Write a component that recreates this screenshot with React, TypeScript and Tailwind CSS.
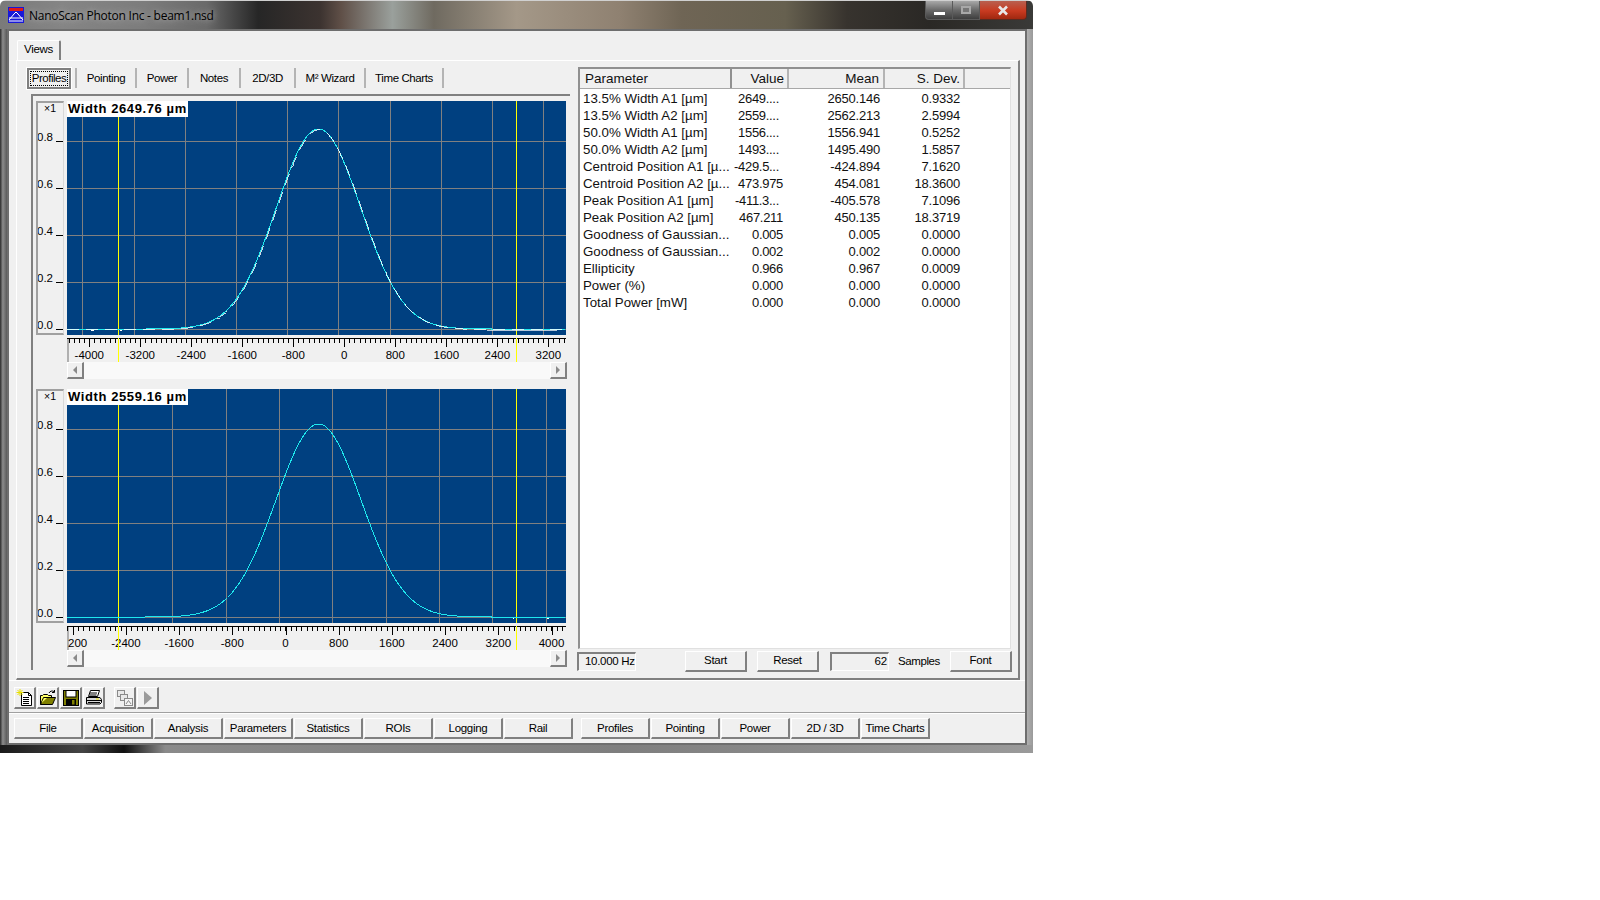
import React from 'react';

// Beam profile curves, in local plot pixels
const gaussian = (center: number, sigma: number, base: number, height: number, width: number) => {
    const pts: string[] = [];
    for (let x = 0; x <= width; x += 1.5) {
        const y = base - height * Math.exp(-((x - center) ** 2) / (2 * sigma * sigma));
        pts.push(`${x},${y.toFixed(1)}`);
    }
    return pts.join(' ');
};

const ROWS = [
    ['13.5% Width A1 [µm]', '2649....', '2650.146', '0.9332'],
    ['13.5% Width A2 [µm]', '2559....', '2562.213', '2.5994'],
    ['50.0% Width A1 [µm]', '1556....', '1556.941', '0.5252'],
    ['50.0% Width A2 [µm]', '1493....', '1495.490', '1.5857'],
    ['Centroid Position A1 [µ...', '-429.5...', '-424.894', '7.1620'],
    ['Centroid Position A2 [µ...', '473.975', '454.081', '18.3600'],
    ['Peak Position A1 [µm]', '-411.3...', '-405.578', '7.1096'],
    ['Peak Position A2 [µm]', '467.211', '450.135', '18.3719'],
    ['Goodness of Gaussian...', '0.005', '0.005', '0.0000'],
    ['Goodness of Gaussian...', '0.002', '0.002', '0.0000'],
    ['Ellipticity', '0.966', '0.967', '0.0009'],
    ['Power (%)', '0.000', '0.000', '0.0000'],
    ['Total Power [mW]', '0.000', '0.000', '0.0000'],
];

const SUB_TABS = [
    { label: 'Pointing', w: 'w-[60px]' },
    { label: 'Power', w: 'w-[52px]' },
    { label: 'Notes', w: 'w-[52px]' },
    { label: '2D/3D', w: 'w-[55px]' },
    { label: 'M² Wizard', w: 'w-[70px]' },
    { label: 'Time Charts', w: 'w-[78px]' },
];

const raised = 'border-t border-l border-r-2 border-b-2 border-t-white border-l-white border-r-[#808080] border-b-[#808080]';
const sunken = 'border-t-2 border-l-2 border-r border-b border-t-[#808080] border-l-[#808080] border-r-white border-b-white';

const PushButton = ({ label, className = '' }: { label: string; className?: string }) => (
    <button className={`${raised} ${className} h-[21px] bg-[#f0f0f0] flex items-center justify-center text-[11.5px] tracking-[-0.3px] text-black`}>
        {label}
    </button>
);

const ScaleBox = ({ height }: { height: number }) => (
    <div className="w-[28px] shrink-0 bg-[#f0f0f0] border-l-2 border-t-2 border-b-2 border-r border-l-[#a0a0a0] border-t-[#a0a0a0] border-b-[#a0a0a0] border-r-[#d8d8d8]">
        <svg width="25" height={height - 4}>
            <text x="6" y="9" fontSize="10.5" fill="#000">×1</text>
            {['0.8', '0.6', '0.4', '0.2', '0.0'].map((t, i) => (
                <g key={t}>
                    <text x="-1" y={38 + i * 47} fontSize="11.5" fill="#000">{t}</text>
                    <rect x="18" y={38 + i * 47} width="7" height="1" fill="#000" />
                </g>
            ))}
        </svg>
    </div>
);

const Plot = ({ label, height, xs, ys, base, peak, sigma, speckle }: { label: string; height: number; xs: number[]; ys: number[]; base: number; peak: number; sigma: number; speckle: boolean }) => (
    <div className="relative w-[499px] bg-[#004080]" style={{ height }}>
        <svg width="499" height={height} className="block">
            {xs.map(x => <rect key={x} x={x} y="0" width="1" height={height} fill="#808080" />)}
            {ys.map(y => <rect key={y} x="0" y={y} width="499" height="1" fill="#808080" />)}
            <rect x="51" y="0" width="1" height={height} fill="#ffff00" />
            <rect x="449" y="0" width="1" height={height} fill="#ffff00" />
            <polyline points={gaussian(251.5, sigma, base, peak, 499)} fill="none" stroke="#1fe8ee" strokeWidth="1" shapeRendering="crispEdges" />
            {speckle && <polyline points={gaussian(252.2, sigma, base + 0.6, peak, 499)} fill="none" stroke="#ffffff" strokeWidth="0.8" strokeDasharray="12 7" shapeRendering="crispEdges" />}
            {speckle ? (
                <g fill="#ffffff">
                    <rect x="24" y={base + 1} width="3" height="1" />
                    <rect x="53" y={base + 1} width="2" height="1" />
                    <rect x="420" y={base + 1} width="70" height="1" opacity="0.7" />
                </g>
            ) : (
                <g fill="#ffffff">
                    <rect x="446" y={base + 1} width="1" height="1" />
                    <rect x="480" y={base + 1} width="2" height="1" />
                </g>
            )}
        </svg>
        <div className="absolute left-0 top-0 w-[121px] h-[16px] bg-white pl-[1px] text-[13px] leading-[16px] font-bold tracking-[0.6px] text-black whitespace-nowrap">
            {label}
        </div>
    </div>
);

const Axis = ({ first, step, labels }: { first: number; step: number; labels: string[] }) => {
    const minors: number[] = [];
    const minor = step / 10;
    const start = first - minor * Math.floor(first / minor);
    for (let x = start; x < 499; x += minor) minors.push(x);
    return (
        <svg width="500" height="24" className="block">
            <rect x="0" y="0" width="2" height="24" fill="#b0b0b0" />
            <rect x="0" y="0" width="499" height="1" fill="#000" />
            {minors.map(x => <rect key={x} x={Math.round(x)} y="0" width="1" height="5" fill="#000" />)}
            {labels.map((t, i) => {
                const x = first + i * step;
                // the first label of the lower axis shows only its tail
                const atEdge = x < 15;
                return (
                    <g key={t}>
                        <rect x={Math.round(x)} y="0" width="1" height="9" fill="#000" />
                        <text x={atEdge ? 1 : x} y="21" textAnchor={atEdge ? 'start' : 'middle'} fontSize="11.5" fill="#000">{t}</text>
                    </g>
                );
            })}
            <rect x="51" y="0" width="1" height="24" fill="#ffff00" />
            <rect x="449" y="0" width="1" height="24" fill="#ffff00" />
        </svg>
    );
};

const ScrollBar = () => (
    <div className="w-[500px] h-[17px] bg-[#f9f9f9] flex justify-between">
        <div className={`${raised} w-[17px] h-[17px] bg-[#f0f0f0] flex items-center justify-center`}>
            <svg width="6" height="8"><polygon points="5,0 5,8 1,4" fill="#8a8a8a" /></svg>
        </div>
        <div className={`${raised} w-[17px] h-[17px] bg-[#f0f0f0] flex items-center justify-center`}>
            <svg width="6" height="8"><polygon points="1,0 1,8 5,4" fill="#8a8a8a" /></svg>
        </div>
    </div>
);

const NewIcon = () => (
    <svg width="18" height="18" viewBox="0 0 18 18">
        <path d="M5.5 3.5h7l3 3v10h-10z" fill="#fff" stroke="#000" />
        <path d="M12.5 3.5v3h3M7 8.5h6M7 10.5h6M7 12.5h6M7 14.5h6" fill="none" stroke="#000" />
        <path d="M4 0v7M0.5 3.5h7M1.5 1l5 5M6.5 1l-5 5" stroke="#e8e000" strokeWidth="1" />
    </svg>
);

const OpenIcon = () => (
    <svg width="18" height="18" viewBox="0 0 18 18">
        <path d="M1.5 15.5v-9h2l1-1h4l1 1h3v2" fill="#ffff66" stroke="#000" />
        <path d="M1.5 15.5l3-7h12l-3 7z" fill="#808000" stroke="#000" />
        <path d="M10 4c1-2 3-2.500 5-1.500M15.500 1v2.500H13" fill="none" stroke="#000" />
        <path d="M2.500 14l2.500-5h3z" fill="#ffff66" />
    </svg>
);

const SaveIcon = () => (
    <svg width="18" height="18" viewBox="0 0 18 18">
        <rect x="1.500" y="1.500" width="15" height="15" fill="#808000" stroke="#000" />
        <rect x="4" y="1.500" width="10" height="6.500" fill="#fff" stroke="#000" />
        <rect x="4" y="10" width="10" height="6.500" fill="#000" />
        <rect x="10" y="11" width="2.500" height="4.500" fill="#808000" />
    </svg>
);

const PrintIcon = () => (
    <svg width="18" height="18" viewBox="0 0 18 18">
        <path d="M5.500 1.500h9l-2 6h-9z" fill="#fff" stroke="#000" />
        <path d="M1.500 8.500h13.500l1.500 2v3l-1.500 1.500H1.500z" fill="#d8d8d8" stroke="#000" />
        <path d="M1.500 11.500h15M3 13.500h12M5 4h7M4.500 6h7" stroke="#000" />
        <rect x="11" y="9.500" width="3" height="1" fill="#e8e000" />
    </svg>
);

const CopyViewsIcon = () => (
    <svg width="18" height="18" viewBox="0 0 18 18">
        <rect x="1.500" y="1.500" width="7" height="6" fill="#e8e8e8" stroke="#8a8a8a" />
        <rect x="4.500" y="5.500" width="7" height="6" fill="#e8e8e8" stroke="#8a8a8a" />
        <rect x="8.500" y="9.500" width="8" height="7" fill="#f4f4f4" stroke="#8a8a8a" />
        <path d="M10 15l2.500-3.500 2.500 3.500" fill="none" stroke="#8a8a8a" />
    </svg>
);

const App: React.FC = () => {
    const tool = `${raised} w-[22px] h-[22px] bg-[#f0f0f0] flex items-center justify-center`;
    const bottomBtn = `${raised} w-[69px] h-[21px] pt-[2px] bg-[#f0f0f0] flex items-center justify-center text-[11.5px] tracking-[-0.3px] text-black`;

    return (
        <div className="min-h-screen bg-white font-['Liberation_Sans',Arial,sans-serif]">
            <div className="w-[1033px] h-[753px] flex flex-col rounded-t-[6px] overflow-hidden">
                {/* Aero title bar over a blurred desktop */}
                <div className="h-[29px] shrink-0 flex bg-[linear-gradient(90deg,#7a7a7a_0%,#858585_6%,#7c7c7c_14%,#6a6a6a_20%,#262626_25%,#3c3330_31%,#5f4f47_33%,#9aa09c_38%,#6f6a60_42%,#a49888_50%,#8f8171_60%,#6f6555_66%,#66604f_76%,#37332e_82%,#2a2825_90%,#3a3a38_100%)] border-t border-t-[#d0d0d0]">
                    <div className="ml-[8px] mt-[6px] w-[16px] h-[16px] bg-[#1818d8] shrink-0">
                        <svg width="16" height="16">
                            <rect x="1" y="1" width="14" height="3" fill="#e01818" />
                            <path d="M1 13L6 7L8 5L10 7L15 13M1 11h14M1 14h14" fill="none" stroke="#fff" />
                        </svg>
                    </div>
                    <span className="ml-[5px] mt-[6px] font-['Open_Sans',sans-serif] text-[12px] leading-[18px] tracking-[-0.25px] text-black [text-shadow:0_0_6px_#c4c4c4]">
                        NanoScan Photon Inc - beam1.nsd
                    </span>
                    <div className="ml-auto mr-[6px] flex h-[19px]">
                        <div className="w-[28px] h-[19px] rounded-bl-[4px] border border-t-0 border-[#5a5a5a] bg-[linear-gradient(180deg,#a8a8a8,#6a6a6a_50%,#3e3e3e)] flex items-end justify-center pb-[4px]">
                            <div className="w-[11px] h-[3px] bg-white" />
                        </div>
                        <div className="w-[27px] h-[19px] border-r border-b border-[#5a5a5a] bg-[linear-gradient(180deg,#a8a8a8,#6a6a6a_50%,#3e3e3e)] flex items-center justify-center">
                            <div className="w-[10px] h-[8px] border-2 border-[#a8a8a8] bg-[#777]" />
                        </div>
                        <div className="w-[47px] h-[19px] rounded-br-[4px] border-r border-b border-[#5a2a20] bg-[linear-gradient(180deg,#b86050,#c83a20_55%,#a02810)] flex items-center justify-center">
                            <svg width="12" height="11"><path d="M2 1.500l8 8M10 1.500l-8 8" stroke="#e8e8e8" strokeWidth="2.600" /></svg>
                        </div>
                    </div>
                </div>

                <div className="flex h-[716px] shrink-0">
                    <div className="w-[7px] bg-[linear-gradient(90deg,#2a2a2a,#8c8c8c_40%,#5a5a5a)]" />

                    {/* Client area */}
                    <div className="w-[1020px] bg-[#f0f0f0] border-2 border-[#6e6e6e] flex flex-col text-black">
                        {/* Views tab */}
                        <div className="h-[29px] shrink-0 pl-[8px] pt-[9px] flex">
                            <div className="w-[44px] h-[20px] pb-[2px] bg-[#f0f0f0] border-t border-l border-r-2 border-t-white border-l-white border-r-[#808080] rounded-t-[2px] flex items-center justify-center text-[11.5px] tracking-[-0.3px]">
                                Views
                            </div>
                        </div>

                        {/* Tab page */}
                        <div className="ml-[7px] w-[1004px] h-[620px] shrink-0 border-t border-l border-r-2 border-b-2 border-t-white border-l-white border-r-[#808080] border-b-[#808080] flex">
                            <div className="w-[550px] pl-[10px] pt-[7px] shrink-0">
                                <div className="flex h-[20px]">
                                    <div className="w-[44px] h-[21px] bg-[#f0f0f0] border-2 border-[#808080] outline outline-1 outline-white flex items-center justify-center text-[11.5px] tracking-[-0.5px]">
                                        <span className="border border-dotted border-black px-[1px] leading-[13px]">Profiles</span>
                                    </div>
                                    <div className="w-[6px] border-r-2 border-r-[#b4b4b4]" />
                                    {SUB_TABS.map(t => (
                                        <div key={t.label} className={`${t.w} pt-[2px] border-r-2 border-r-[#b4b4b4] flex items-center justify-center text-[11.5px] tracking-[-0.4px] whitespace-nowrap`}>
                                            {t.label}
                                        </div>
                                    ))}
                                </div>

                                {/* Profile plots */}
                                <div className="mt-[6px] ml-[4px] w-[539px] h-[576px] border-t-2 border-l-2 border-t-[#808080] border-l-[#808080] pl-[3px] pt-[5px]">
                                    <div className="flex gap-[3px]">
                                        <ScaleBox height={234} />
                                        <Plot label="Width 2649.76 µm" height={234} xs={[15, 67, 118, 169, 220, 271, 323, 374, 425, 476]} ys={[40, 87, 134, 181, 228]} base={228} peak={200} sigma={42.2} speckle />
                                    </div>
                                    <div className="ml-[31px] mt-[3px]">
                                        <Axis first={22.3} step={51} labels={['-4000', '-3200', '-2400', '-1600', '-800', '0', '800', '1600', '2400', '3200']} />
                                        <ScrollBar />
                                    </div>
                                    <div className="flex gap-[3px] mt-[10px]">
                                        <ScaleBox height={234} />
                                        <Plot label="Width 2559.16 µm" height={234} xs={[105, 159, 212, 265, 319, 372, 425, 479]} ys={[40, 87, 134, 181, 228]} base={228} peak={193} sigma={42.5} speckle={false} />
                                    </div>
                                    <div className="ml-[31px] mt-[3px]">
                                        <Axis first={5.7} step={53.2} labels={['200', '-2400', '-1600', '-800', '0', '800', '1600', '2400', '3200', '4000']} />
                                        <ScrollBar />
                                    </div>
                                </div>
                            </div>

                            {/* Statistics list */}
                            <div className="ml-[10px] w-[436px] pt-[6px] shrink-0">
                                <div className="ml-[1px] w-[433px] h-[582px] bg-white border-t-2 border-l-2 border-t-[#909090] border-l-[#909090] border-r border-b border-r-[#e0e0e0] border-b-[#e0e0e0]">
                                    <div className="flex h-[20px] bg-[#f0f0f0] border-b border-b-[#a8a8a8] text-[13.5px] leading-[19px] text-[#111]">
                                        <div className="w-[152px] pl-[5px] border-r-2 border-r-[#909090]">Parameter</div>
                                        <div className="w-[57px] pr-[3px] text-right border-r-2 border-r-[#b4b4b4]">Value</div>
                                        <div className="w-[96px] pr-[4px] text-right border-r-2 border-r-[#b4b4b4]">Mean</div>
                                        <div className="w-[80px] pr-[3px] text-right border-r-2 border-r-[#b4b4b4]">S. Dev.</div>
                                    </div>
                                    <div className="pt-[1px] text-[13px] leading-[17px] text-[#111]">
                                        {ROWS.map((r, i) => (
                                            <div key={i} className="flex h-[17px] whitespace-nowrap">
                                                <div className="w-[152px] pl-[3px] text-[13.3px]">{r[0]}</div>
                                                <div className={`w-[57px] text-right tracking-[-0.3px] ${r[1].endsWith('...') ? 'pr-[10px]' : 'pr-[6px]'}`}>{r[1]}</div>
                                                <div className="w-[96px] pr-[5px] text-right tracking-[-0.2px]">{r[2]}</div>
                                                <div className="w-[80px] pr-[5px] text-right tracking-[-0.2px]">{r[3]}</div>
                                            </div>
                                        ))}
                                    </div>
                                </div>
                                <div className="flex items-center mt-[2px] h-[21px]">
                                    <div className={`${sunken} w-[59px] h-[19px] flex items-center pl-[6px] text-[11.5px] tracking-[-0.3px] whitespace-nowrap`}>10.000 Hz</div>
                                    <PushButton label="Start" className="ml-[49px] w-[62px]" />
                                    <PushButton label="Reset" className="ml-[10px] w-[62px]" />
                                    <div className={`${sunken} ml-[11px] w-[59px] h-[19px] flex items-center justify-end pr-[1px] text-[11.5px] tracking-[-0.2px]`}>62</div>
                                    <span className="ml-[9px] w-[52px] text-[11.5px] tracking-[-0.4px]">Samples</span>
                                    <PushButton label="Font" className="w-[62px]" />
                                </div>
                            </div>
                        </div>

                        {/* Tool strip */}
                        <div className="h-[33px] shrink-0 border-t border-t-white border-b border-b-[#a0a0a0] flex pl-[5px] pt-[6px] gap-[1px]">
                            <div className={tool}><NewIcon /></div>
                            <div className={tool}><OpenIcon /></div>
                            <div className={tool}><SaveIcon /></div>
                            <div className={tool}><PrintIcon /></div>
                            <div className={`${tool} ml-[8px]`}><CopyViewsIcon /></div>
                            <div className={tool}><svg width="10" height="16"><polygon points="1,1 1,15 9,8" fill="#9a9a9a" /></svg></div>
                        </div>

                        {/* Bottom command buttons */}
                        <div className="border-t border-t-white pl-[5px] pt-[4px] flex">
                            <div className="flex gap-[1px]">
                                {['File', 'Acquisition', 'Analysis', 'Parameters', 'Statistics', 'ROIs', 'Logging', 'Rail'].map(b => (
                                    <div key={b} className={bottomBtn}>{b}</div>
                                ))}
                            </div>
                            <div className="flex gap-[1px] ml-[8px]">
                                {['Profiles', 'Pointing', 'Power', '2D / 3D', 'Time Charts'].map(b => (
                                    <div key={b} className={bottomBtn}>{b}</div>
                                ))}
                            </div>
                        </div>
                    </div>

                    <div className="w-[6px] bg-[linear-gradient(90deg,#b0b0b0,#9a9a9a)]" />
                </div>

                <div className="h-[8px] shrink-0 bg-[linear-gradient(90deg,#1a1a1a_0%,#444_8%,#101010_12%,#8a8a8a_16%,#7e7e7e_60%,#9a9a9a_100%)]" />
            </div>
        </div>
    );
};

export default App;
